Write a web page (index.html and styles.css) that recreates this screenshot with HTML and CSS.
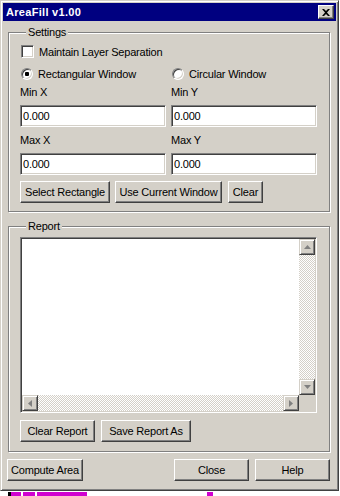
FILE: index.html
```html
<!DOCTYPE html>
<html lang="en">
<head>
	<meta charset="UTF-8">
	<title>AreaFill v1.00</title>
	<link rel="stylesheet" href="styles.css">
</head>
<body>
<div class="window">
    <div class="titlebar">
        <span class="title">AreaFill v1.00</span>
        <span class="close">
            <svg width="8" height="7" viewBox="0 0 8 7"><path d="M0 0h2l2 2 2-2h2L5 3.5 8 7H6L4 5 2 7H0l3-3.5z" fill="#000"/></svg>
        </span>
    </div>
    <div class="client">
        <fieldset class="group settings">
            <legend>Settings</legend>
            <div class="check-row"><span class="checkbox"></span>Maintain Layer Separation</div>
            <div class="two-col radio-row">
                <div class="radio-item"><span class="radio on"></span>Rectangular Window</div>
                <div class="radio-item"><span class="radio"></span>Circular Window</div>
            </div>
            <div class="two-col fields">
                <div class="field-label">Min X</div>
                <div class="field-label">Min Y</div>
                <input class="textbox" type="text" value="0.000">
                <input class="textbox" type="text" value="0.000">
                <div class="field-label">Max X</div>
                <div class="field-label">Max Y</div>
                <input class="textbox" type="text" value="0.000">
                <input class="textbox" type="text" value="0.000">
            </div>
            <div class="btn-row">
                <button class="btn w-select">Select Rectangle</button>
                <button class="btn w-current">Use Current Window</button>
                <button class="btn w-clear">Clear</button>
            </div>
        </fieldset>

        <fieldset class="group report">
            <legend>Report</legend>
            <div class="report-box">
                <div class="report-text"></div>
                <div class="vscroll">
                    <span class="sbtn"><svg width="7" height="4" viewBox="0 0 7 4"><path d="M3.5 0L7 4H0z" fill="#808080"/></svg></span>
                    <span class="track"></span>
                    <span class="sbtn"><svg width="7" height="4" viewBox="0 0 7 4"><path d="M0 0h7L3.5 4z" fill="#808080"/></svg></span>
                </div>
                <div class="hscroll">
                    <span class="sbtn"><svg width="4" height="7" viewBox="0 0 4 7"><path d="M4 0v7L0 3.5z" fill="#808080"/></svg></span>
                    <span class="track"></span>
                    <span class="sbtn"><svg width="4" height="7" viewBox="0 0 4 7"><path d="M0 0l4 3.5L0 7z" fill="#808080"/></svg></span>
                </div>
                <div class="corner"></div>
            </div>
            <div class="btn-row">
                <button class="btn w-clearrep">Clear Report</button>
                <button class="btn w-save">Save Report As</button>
            </div>
        </fieldset>

        <div class="footer">
            <button class="btn w-compute">Compute Area</button>
            <span class="spacer"></span>
            <button class="btn w-foot">Close</button>
            <button class="btn w-foot">Help</button>
        </div>
    </div>
</div>
<div class="desktop">
    <span class="bit k" style="width: 3px"></span>
    <span class="bit m" style="width: 10px"></span>
    <span class="bit w" style="width: 2px"></span>
    <span class="bit m" style="width: 12px"></span>
    <span class="bit w" style="width: 2px"></span>
    <span class="bit m" style="width: 50px"></span>
    <span class="bit w" style="width: 120px"></span>
    <span class="bit m" style="width: 6px"></span>
</div>
</body>
</html>
```

FILE: styles.css
```css
* {
    margin: 0;
    padding: 0;
    box-sizing: border-box;
}

body {
    width: 340px;
    height: 496px;
    overflow: hidden;
    background: #fff;
    font-family: "Liberation Sans", Arial, sans-serif;
    font-size: 11px;
    letter-spacing: -0.2px;
    color: #000;
}

.window {
    display: flex;
    flex-direction: column;
    width: 339px;
    height: 491px;
    padding: 2px;
    background: #d4d0c8;
    border: 1px solid;
    border-color: #d4d0c8 #404040 #404040 #d4d0c8;
    box-shadow: inset 1px 1px 0 #fff, inset -1px -1px 0 #808080;
}

/* title bar */
.titlebar {
    display: flex;
    align-items: center;
    height: 18px;
    padding: 0 2px 0 3px;
    background: #000080;
}

.title {
    flex: 1;
    color: #fff;
    font-weight: bold;
    letter-spacing: 0.3px;
}

.close {
    display: flex;
    align-items: center;
    justify-content: center;
    width: 16px;
    height: 14px;
    background: #d4d0c8;
    border: 1px solid;
    border-color: #fff #404040 #404040 #fff;
    box-shadow: inset -1px -1px 0 #808080;
}

.client {
    flex: 1;
    padding: 5px 6px 0 5px;
}

/* group boxes */
.group {
    border: 1px solid #808080;
    box-shadow: 1px 1px 0 #fff, inset 1px 1px 0 #fff;
}

.group legend {
    margin-left: 6px;
    padding: 0 2px;
    line-height: 13px;
    background: #d4d0c8;
}

.settings {
    padding: 5px 12px 8px 11px;
}

.report {
    margin-top: 8px;
    padding: 4px 12px 9px 11px;
}

.check-row {
    display: flex;
    align-items: center;
    height: 15px;
}

.checkbox {
    width: 13px;
    height: 13px;
    margin: 0 5px 0 1px;
    background: #fff;
    border: 1px solid;
    border-color: #808080 #fff #fff #808080;
    box-shadow: inset 1px 1px 0 #404040, inset -1px -1px 0 #d4d0c8;
}

.two-col {
    display: grid;
    grid-template-columns: 146px 146px;
    column-gap: 5px;
}

.radio-row {
    margin-top: 7px;
    height: 15px;
}

.radio-item {
    display: flex;
    align-items: center;
}

.radio {
    width: 12px;
    height: 12px;
    margin: 0 5px 0 1px;
    border-radius: 50%;
    background: #fff;
    border: 1px solid;
    border-color: #808080 #fff #fff #808080;
    box-shadow: inset 1px 1px 0 #404040, inset -1px -1px 0 #d4d0c8;
}

.radio.on {
    background: radial-gradient(circle, #000 0 2px, #fff 2.5px);
}

.fields {
    margin-top: 4px;
    grid-template-rows: 14px 22px 14px 22px;
    row-gap: 6px;
}

.field-label {
    line-height: 14px;
}

.textbox {
    width: 146px;
    height: 22px;
    padding: 0 2px;
    font: inherit;
    letter-spacing: inherit;
    color: #000;
    background: #fff;
    border: 1px solid;
    border-color: #808080 #fff #fff #808080;
    box-shadow: inset 1px 1px 0 #404040, inset -1px -1px 0 #d4d0c8;
    outline: none;
}

/* buttons */
.btn-row {
    display: flex;
    gap: 6px;
    margin-top: 6px;
}

.report .btn-row {
    margin-top: 7px;
}

.btn {
    height: 22px;
    padding: 0;
    font: inherit;
    letter-spacing: inherit;
    color: #000;
    background: #d4d0c8;
    border: 1px solid;
    border-color: #fff #404040 #404040 #fff;
    box-shadow: inset -1px -1px 0 #808080;
}

.w-select { width: 90px; }
.w-current { width: 107px; margin-left: -1px; }
.w-clear { width: 35px; }
.w-clearrep { width: 75px; }
.w-save { width: 90px; }
.w-compute { width: 76px; margin-left: -1px; }
.w-foot { width: 75px; }

/* report text area */
.report-box {
    display: grid;
    grid-template-columns: 1fr 16px;
    grid-template-rows: 1fr 16px;
    width: 297px;
    height: 176px;
    background: #fff;
    border: 1px solid;
    border-color: #808080 #fff #fff #808080;
    box-shadow: inset 1px 1px 0 #404040, inset -1px -1px 0 #d4d0c8;
    padding: 1px;
}

.vscroll {
    display: flex;
    flex-direction: column;
}

.hscroll {
    display: flex;
}

.track {
    flex: 1;
    background: repeating-conic-gradient(#fff 0 25%, #d4d0c8 0 50%) 0 0 / 2px 2px;
}

.sbtn {
    display: flex;
    align-items: center;
    justify-content: center;
    width: 16px;
    height: 16px;
    background: #d4d0c8;
    border: 1px solid;
    border-color: #d4d0c8 #404040 #404040 #d4d0c8;
    box-shadow: inset 1px 1px 0 #fff, inset -1px -1px 0 #808080;
}

.corner {
    background: #d4d0c8;
}

.footer {
    display: flex;
    gap: 6px;
    margin-top: 7px;
}

.spacer {
    flex: 1;
}

/* screen behind the dialog */
.desktop {
    display: flex;
    height: 5px;
    padding: 1px 0 0 8px;
}

.bit.k { background: #000; }
.bit.m { background: #d000d0; }
.bit.w { background: #fff; }
```
